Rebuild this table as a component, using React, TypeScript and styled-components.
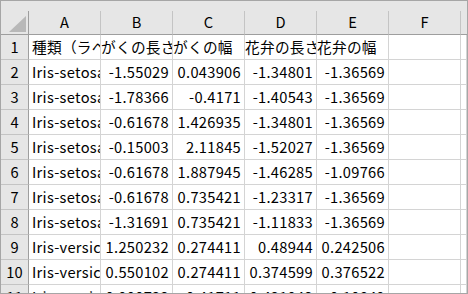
import React from "react";
import styled, { createGlobalStyle } from "styled-components";

const Global = createGlobalStyle`
  html, body { margin: 0; padding: 0; background: #ffffff; }
  body { font-family: "Noto Sans CJK JP", "Noto Sans", sans-serif; }
`;

const Frame = styled.div`
  width: 468px;
  height: 294px;
  box-sizing: border-box;
  border: 1px solid #a6a6a6;
  overflow: hidden;
  background: #ffffff;
  display: flex;
  flex-direction: column;
`;

const TopStrip = styled.div`
  flex: none;
  height: 10px;
  background: #e6e6e6;
`;

const Grid = styled.div`
  display: grid;
  grid-template-columns: 28px repeat(6, 72px) 1fr;
  grid-template-rows: 24px;
  grid-auto-rows: 25px;
  font-size: 14.67px;
  color: #000000;
`;

const Corner = styled.div`
  box-sizing: border-box;
  background: #e6e6e6;
  border-right: 1px solid #9e9e9e;
  border-bottom: 1px solid #9e9e9e;
  display: flex;
  align-items: flex-end;
  justify-content: flex-end;
  padding: 0 2px 2px 0;
`;

const ColHead = styled.div<{ $last?: boolean }>`
  box-sizing: border-box;
  background: #e6e6e6;
  border-right: ${(p) => (p.$last ? "none" : "1px solid #c4c4c4")};
  border-bottom: 1px solid #9e9e9e;
  display: flex;
  align-items: center;
  justify-content: center;
  line-height: 1;
`;

const RowHead = styled.div`
  box-sizing: border-box;
  background: #e6e6e6;
  border-right: 1px solid #9e9e9e;
  border-bottom: 1px solid #c4c4c4;
  display: flex;
  align-items: center;
  justify-content: center;
  line-height: 1;
`;

const Cell = styled.div<{ $num?: boolean; $pad?: number }>`
  box-sizing: border-box;
  border-right: 1px solid #d4d4d4;
  border-bottom: 1px solid #d4d4d4;
  overflow: hidden;
  white-space: nowrap;
  display: flex;
  align-items: center;
  justify-content: ${(p) => (p.$num ? "flex-end" : "flex-start")};
  padding: ${(p) => (p.$num ? "0 3px 0 0" : `0 0 0 ${p.$pad ?? 3}px`)};
  line-height: 1;
  letter-spacing: 0.3px;
`;

const cols = ["A", "B", "C", "D", "E", "F", ""];

const header = ["種類（ラベル）", "がくの長さ", "がくの幅", "花弁の長さ", "花弁の幅"];

const rows: [string, string, string, string, string][] = [
  ["Iris-setosa", "-1.55029", "0.043906", "-1.34801", "-1.36569"],
  ["Iris-setosa", "-1.78366", "-0.4171", "-1.40543", "-1.36569"],
  ["Iris-setosa", "-0.61678", "1.426935", "-1.34801", "-1.36569"],
  ["Iris-setosa", "-0.15003", "2.11845", "-1.52027", "-1.36569"],
  ["Iris-setosa", "-0.61678", "1.887945", "-1.46285", "-1.09766"],
  ["Iris-setosa", "-0.61678", "0.735421", "-1.23317", "-1.36569"],
  ["Iris-setosa", "-1.31691", "0.735421", "-1.11833", "-1.36569"],
  ["Iris-versicolor", "1.250232", "0.274411", "0.48944", "0.242506"],
  ["Iris-versicolor", "0.550102", "0.274411", "0.374599", "0.376522"],
  ["Iris-versicolor", "0.900733", "-0.41711", "0.431942", "0.10849"],
];

const CornerMark = () => (
  <svg width="17" height="16" viewBox="0 0 17 16">
    <polygon points="17,0 17,16 0,16" fill="#b8b8b8" />
  </svg>
);

export default function App() {
  return (
    <>
      <Global />
      <Frame>
        <TopStrip />
        <Grid>
          <Corner>
            <CornerMark />
          </Corner>
          {cols.map((c, i) => (
            <ColHead key={i} $last={i === cols.length - 1}>
              {c}
            </ColHead>
          ))}

          <RowHead>1</RowHead>
          {header.map((h, i) => (
            <Cell key={i} $pad={i === 0 ? 3 : 0}>
              {h}
            </Cell>
          ))}
          <Cell />
          <Cell />

          {rows.map((r, ri) => (
            <React.Fragment key={ri}>
              <RowHead>{ri + 2}</RowHead>
              <Cell>{r[0]}</Cell>
              <Cell $num>{r[1]}</Cell>
              <Cell $num>{r[2]}</Cell>
              <Cell $num>{r[3]}</Cell>
              <Cell $num>{r[4]}</Cell>
              <Cell />
              <Cell />
            </React.Fragment>
          ))}
        </Grid>
      </Frame>
    </>
  );
}
